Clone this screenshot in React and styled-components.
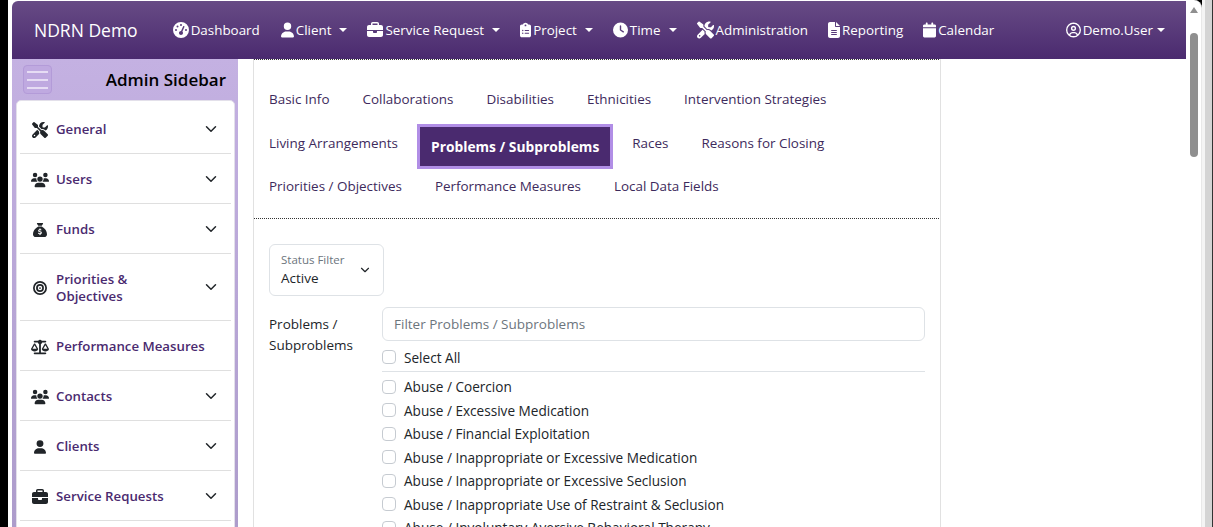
import styled, { createGlobalStyle } from 'styled-components';
import {
  FaGaugeHigh, FaUser, FaBriefcase, FaClipboardList, FaClock, FaScrewdriverWrench, FaFileLines,
  FaCalendar, FaRegCircleUser, FaUsers, FaBullseye, FaScaleBalanced, FaSackDollar,
} from 'react-icons/fa6';
import { ChevronDown } from 'lucide-react';

const GlobalStyle = createGlobalStyle`
  html, body {
    margin: 0;
    height: 100%;
    overflow: hidden;
    background: #000;
  }
  * { box-sizing: border-box; }
  body {
    font-family: "Open Sans", "Noto Sans", sans-serif;
    font-size: 13.5px;
    color: #212529;
  }
`;

const Frame = styled.div`
  display: flex;
  height: 527px;
  width: 1213px;
  padding-left: 8px;
`;

const Page = styled.div`
  width: 1178px;
  height: 527px;
  background: #fff;
  padding: 1px 0 0 4px;
  overflow: hidden;
`;

const ScrollTrack = styled.div`
  width: 16px;
  background: #fff;
  padding-top: 7px;
  display: flex;
  flex-direction: column;
  align-items: center;
  gap: 20px;
  border-right: 1px solid #e8e8e8;
  border-radius: 0 8px 0 0;
`;

const ScrollArrow = styled.div`
  width: 0;
  height: 0;
  border-left: 4px solid transparent;
  border-right: 4px solid transparent;
  border-bottom: 6px solid #8f8f8f;
`;

const ScrollThumb = styled.div`
  width: 8px;
  height: 124px;
  border-radius: 4px;
  background: #8f8f8f;
`;

const ChromeEdge = styled.div`
  width: 11px;
  background: #d4d4d4;
  border-left: 3px solid #f4f4f4;
  border-right: 1px solid #333;
`;

const Navbar = styled.nav`
  display: flex;
  align-items: center;
  height: 58px;
  padding: 0 21px 0 22px;
  background: linear-gradient(#674b85, #4a2a6f);
  border-radius: 6px 0 0 0;
  color: #fff;
`;

const Brand = styled.span`
  font-size: 17.5px;
  margin-right: 35px;
  white-space: nowrap;
`;

const NavLink = styled.span`
  display: inline-flex;
  align-items: center;
  gap: 2px;
  padding-bottom: 1px;
  white-space: nowrap;
  margin-right: ${(p) => p.$gap ?? 20}px;
  font-size: 13.4px;
  svg {
    flex: none;
    width: ${(p) => p.$icon ?? 15}px;
    height: 18px;
  }
`;

const Caret = styled.span`
  width: 0;
  height: 0;
  margin-left: ${(p) => p.$offset ?? 6}px;
  border-top: 4px solid #fff;
  border-left: 4px solid transparent;
  border-right: 4px solid transparent;
`;

const Spacer = styled.div`
  flex: 1;
`;

const Body = styled.div`
  display: flex;
  align-items: flex-start;
`;

const Sidebar = styled.aside`
  width: 226px;
  flex: none;
  background: linear-gradient(#c4b1e2, #ad9ccb);
  height: 468px;
  padding: 0 3px 0 4px;
  overflow: hidden;
`;

const SidebarHeader = styled.div`
  display: flex;
  align-items: center;
  justify-content: space-between;
  height: 41px;
  padding: 0 9px 0 7px;
`;

const Burger = styled.div`
  display: flex;
  flex-direction: column;
  justify-content: center;
  gap: 6px;
  width: 29px;
  height: 29px;
  padding: 0 3px;
  border: 1px solid #b39bd8;
  border-radius: 4px;
  background: #bfa9e0;
  span { display: block; height: 2px; background: #e6dcf4; }
`;

const SidebarTitle = styled.h2`
  margin: 0;
  font-size: 17px;
  font-weight: 600;
  color: #000;
`;

const SideList = styled.div`
  background: #fff;
  border: 1px solid #e3e0ea;
  border-radius: 5px 5px 0 0;
  padding: 3px 3px 0;
  min-height: 440px;
`;

const SideRow = styled.div`
  display: flex;
  align-items: center;
  height: ${(p) => (p.$tall ? 67 : 50)}px;
  border-bottom: 1px solid #dfdfdf;
  padding: 2px 11px 0 11px;
  color: #4a2a6f;
  font-weight: 600;
  font-size: 13.25px;
  line-height: 17px;
`;

const SideIcon = styled.span`
  display: inline-flex;
  justify-content: center;
  width: 18px;
  margin-right: 7px;
  color: #212529;
  svg {
    flex: none;
    width: ${(p) => p.$w ?? 15}px;
    height: 18px;
  }
`;

const SideLabel = styled.span`
  flex: 1;
  max-width: ${(p) => (p.$wrap ? '110px' : 'none')};
  margin-right: auto;
`;

const SideChevron = styled(ChevronDown)`
  margin-bottom: 2px;
  color: #212529;
`;

const Main = styled.main`
  width: 688px;
  margin-left: 15px;
  flex: none;
  border-left: 1px solid #e1e1e1;
  border-right: 1px solid #e1e1e1;
  height: 468px;
  overflow: hidden;
`;

const TabBox = styled.div`
  border: 1px dotted #333;
  margin: 0 -1px;
  padding: 17px 15px 0;
  height: 160px;
`;

const TabRow = styled.div`
  display: flex;
  align-items: center;
  height: ${(p) => p.$h}px;
  gap: 33px;
`;

const Tab = styled.span`
  white-space: nowrap;
  font-size: 13.45px;
  color: #3d2a5c;
`;

const ActiveTab = styled.span`
  background: #4a2a6f;
  border: 3px solid #b18ee6;
  color: #fff;
  font-weight: 700;
  font-size: 13.8px;
  line-height: 19px;
  padding: 10px 11px;
  margin: 6px -14px 0 -14px;
  white-space: nowrap;
`;

const FilterArea = styled.div`
  padding: 25px 15px 0;
`;

const StatusSelect = styled.div`
  display: flex;
  align-items: center;
  justify-content: space-between;
  width: 115px;
  height: 52px;
  border: 1px solid #dee2e6;
  border-radius: 6px;
  padding: 0 11px;
  margin-bottom: 11px;
`;

const SelectLabel = styled.div`
  font-size: 11.5px;
  color: #6c757d;
  line-height: 16px;
`;

const SelectValue = styled.div`
  font-size: 13.5px;
  line-height: 20px;
`;

const FieldRow = styled.div`
  display: grid;
  grid-template-columns: 113px 1fr;
`;

const FieldLabel = styled.label`
  line-height: 21px;
  padding-top: 7px;
`;

const FilterInput = styled.input`
  width: 100%;
  height: 34px;
  border: 1px solid #dee2e6;
  border-radius: 6px;
  padding: 0 11px;
  font: inherit;
  &::placeholder { color: #6c757d; }
`;

const CheckRow = styled.label`
  display: flex;
  align-items: center;
  gap: 8px;
  height: ${(p) => p.$h ?? 23.5}px;
  font-size: 13.6px;
  white-space: nowrap;
  border-bottom: ${(p) => (p.$rule ? '1px solid #dee2e6' : 'none')};
  margin-bottom: ${(p) => (p.$rule ? '3px' : '0')};
  padding-top: ${(p) => (p.$rule ? '2px' : '0')};
`;

const CheckBox = styled.span`
  width: 14px;
  height: 14px;
  border: 1px solid #c6cbd1;
  border-radius: 4px;
  background: #fff;
`;

const navItems = [
  { icon: FaGaugeHigh, label: 'Dashboard', size: 16, gap: 21 },
  { icon: FaUser, label: 'Client', size: 13, caret: true },
  { icon: FaBriefcase, label: 'Service Request', size: 16, caret: true },
  { icon: FaClipboardList, label: 'Project', size: 11, caret: true },
  { icon: FaClock, label: 'Time', size: 15, caret: true },
  { icon: FaScrewdriverWrench, label: 'Administration', size: 17 },
  { icon: FaFileLines, label: 'Reporting', size: 12 },
  { icon: FaCalendar, label: 'Calendar', size: 13 },
];

const sideItems = [
  { icon: FaScrewdriverWrench, w: 16, label: 'General', more: true },
  { icon: FaUsers, w: 18, label: 'Users', more: true },
  { icon: FaSackDollar, w: 14, label: 'Funds', more: true },
  { icon: FaBullseye, w: 14, label: 'Priorities & Objectives', more: true, tall: true },
  { icon: FaScaleBalanced, w: 18, label: 'Performance Measures' },
  { icon: FaUsers, w: 18, label: 'Contacts', more: true },
  { icon: FaUser, w: 12, label: 'Clients', more: true },
  { icon: FaBriefcase, w: 16, label: 'Service Requests', more: true },
];

const problems = [
  'Abuse / Coercion',
  'Abuse / Excessive Medication',
  'Abuse / Financial Exploitation',
  'Abuse / Inappropriate or Excessive Medication',
  'Abuse / Inappropriate or Excessive Seclusion',
  'Abuse / Inappropriate Use of Restraint & Seclusion',
  'Abuse / Involuntary Aversive Behavioral Therapy',
];

const App = () => (
  <>
    <GlobalStyle />
    <Frame>
      <Page>
        <Navbar>
          <Brand>NDRN Demo</Brand>
          {navItems.map(({ icon: Icon, label, size, gap, caret }) => (
            <NavLink key={label} $icon={size} $gap={gap}>
              <Icon />
              {label}
              {caret && <Caret />}
            </NavLink>
          ))}
          <Spacer />
          <NavLink $gap={0}>
            <FaRegCircleUser />
            Demo.User
            <Caret $offset={2} />
          </NavLink>
        </Navbar>
        <Body>
          <Sidebar>
            <SidebarHeader>
              <Burger><span /><span /><span /></Burger>
              <SidebarTitle>Admin Sidebar</SidebarTitle>
            </SidebarHeader>
            <SideList>
              {sideItems.map(({ icon: Icon, w, label, more, tall }) => (
                <SideRow key={label} $tall={tall}>
                  <SideIcon $w={w}><Icon /></SideIcon>
                  <SideLabel $wrap={tall}>{label}</SideLabel>
                  {more && <SideChevron size={18} />}
                </SideRow>
              ))}
            </SideList>
          </Sidebar>
          <Main>
            <TabBox>
              <TabRow $h={44}>
                <Tab>Basic Info</Tab>
                <Tab>Collaborations</Tab>
                <Tab>Disabilities</Tab>
                <Tab>Ethnicities</Tab>
                <Tab>Intervention Strategies</Tab>
              </TabRow>
              <TabRow $h={44}>
                <Tab>Living Arrangements</Tab>
                <ActiveTab>Problems / Subproblems</ActiveTab>
                <Tab>Races</Tab>
                <Tab>Reasons for Closing</Tab>
              </TabRow>
              <TabRow $h={41}>
                <Tab>Priorities / Objectives</Tab>
                <Tab>Performance Measures</Tab>
                <Tab>Local Data Fields</Tab>
              </TabRow>
            </TabBox>
            <FilterArea>
              <StatusSelect>
                <div>
                  <SelectLabel>Status Filter</SelectLabel>
                  <SelectValue>Active</SelectValue>
                </div>
                <ChevronDown size={14} />
              </StatusSelect>
              <FieldRow>
                <FieldLabel>Problems / Subproblems</FieldLabel>
                <div>
                  <FilterInput placeholder="Filter Problems / Subproblems" readOnly />
                  <CheckRow $h={31} $rule><CheckBox />Select All</CheckRow>
                  {problems.map((name) => (
                    <CheckRow key={name}><CheckBox />{name}</CheckRow>
                  ))}
                </div>
              </FieldRow>
            </FilterArea>
          </Main>
        </Body>
      </Page>
      <ScrollTrack>
        <ScrollArrow />
        <ScrollThumb />
      </ScrollTrack>
      <ChromeEdge />
    </Frame>
  </>
);

export default App;
